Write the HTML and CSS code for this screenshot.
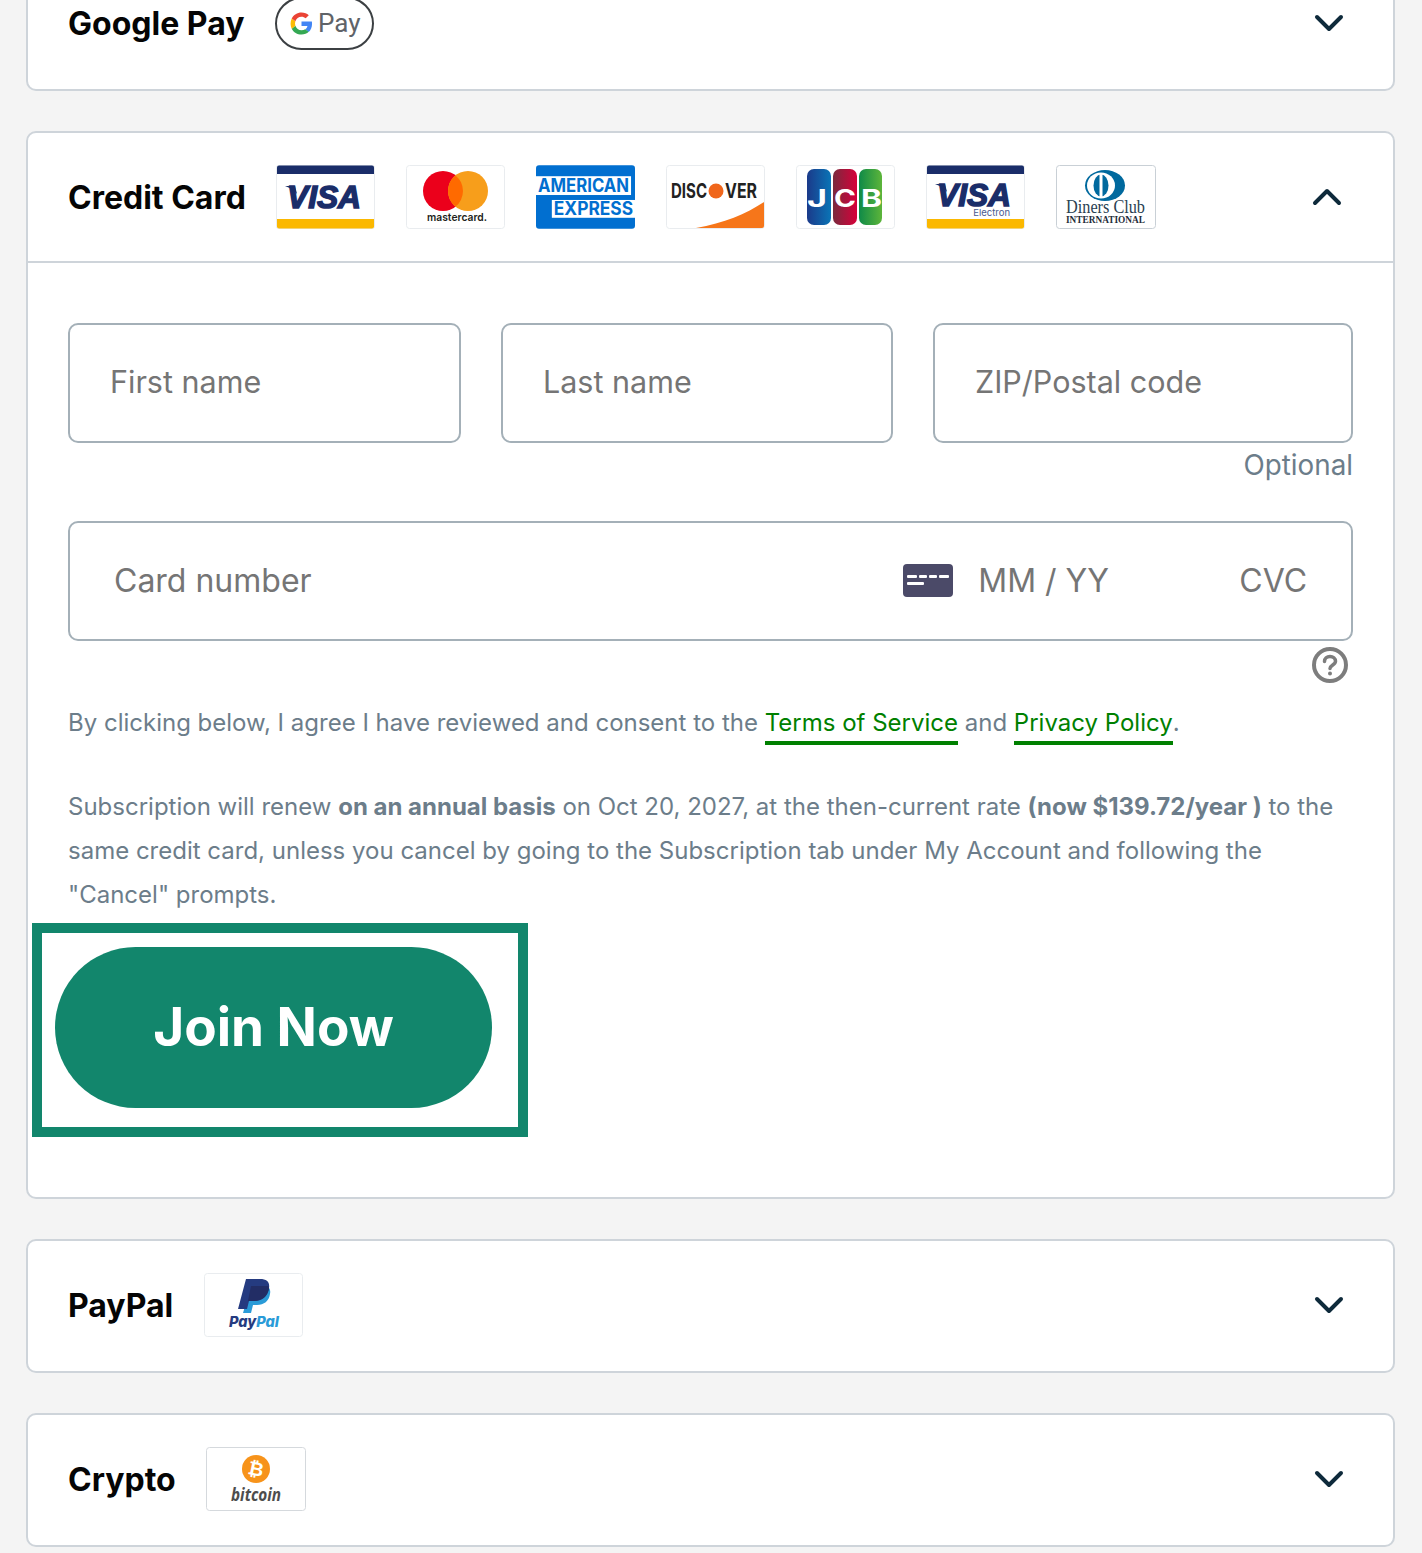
FILE: index.html
```html
<!DOCTYPE html>
<html lang="en">
<head>
<meta charset="utf-8">
<title>Payment</title>
<link rel="stylesheet" href="styles.css">
</head>
<body>
<main class="page">
  <section class="card">
    <header class="head">
      <h2 class="title">Google Pay</h2>
      <span class="gpay">
        <svg class="g" viewBox="0 0 24 24" width="23" height="23"><path fill="#4285f4" d="M23 12.300c0-.9-.1-1.600-.2-2.300H12v4.500h6.200c-.3 1.400-1.100 2.700-2.400 3.500l3.700 2.900c2.200-2 3.500-5 3.500-8.600z"/><path fill="#34a853" d="M12 23.500c3.100 0 5.700-1 7.500-2.800L15.800 18c-1 .7-2.300 1.100-3.800 1.100-3 0-5.500-2-6.400-4.700l-3.800 3c1.900 3.700 5.700 6.100 10.200 6.100z"/><path fill="#fbbc04" d="M5.600 14.400c-.5-1.500-.5-3.200 0-4.700l-3.800-3c-1.600 3.200-1.600 7.500 0 10.700z"/><path fill="#ea4335" d="M12 4.900c1.700 0 3.200.6 4.400 1.700l3.200-3.200C17.700 1.600 15.100.5 12 .5 7.500.5 3.700 3 1.800 6.700l3.800 3C6.500 6.900 9 4.900 12 4.900z"/></svg>
        <span class="gpay-text">Pay</span>
      </span>
      <svg class="chev" viewBox="0 0 30 20" width="30" height="20"><path d="M3 4l12 12L27 4"/></svg>
    </header>
  </section>

  <section class="card">
    <header class="head head-rule">
      <h2 class="title">Credit Card</h2>
      <div class="logos">
        <svg class="logo" viewBox="0 0 99 64"><rect x=".5" y=".5" width="98" height="63" rx="2" fill="#fff" stroke="#e9ecef"/><path fill="#1a2d69" d="M1 2.500a2 2 0 0 1 2-2h93a2 2 0 0 1 2 2V9H1z"/><path fill="#fbb800" d="M1 54h97v7.500a2 2 0 0 1-2 2H3a2 2 0 0 1-2-2z"/><path fill="#1a2d69" d="M9 21h10l2 8c-3-4-7-6-12-8z"/><text x="11" y="43" class="t-visa" textLength="74" lengthAdjust="spacingAndGlyphs">VISA</text></svg>
        <svg class="logo" viewBox="0 0 99 64"><rect x=".5" y=".5" width="98" height="63" rx="3" fill="#fff" stroke="#e9ecef"/><circle cx="37" cy="26" r="20" fill="#eb001b"/><circle cx="62" cy="26" r="20" fill="#f79e1b"/><path fill="#ff6a00" d="M49.500 10.400a20 20 0 0 1 0 31.200a20 20 0 0 1 0-31.200z"/><text x="21" y="56" class="t-mc" textLength="60" lengthAdjust="spacingAndGlyphs">mastercard.</text></svg>
        <svg class="logo" viewBox="0 0 100 64"><rect width="100" height="64" rx="3" fill="#016fd0"/><rect y="11" width="96" height="19" fill="#fff"/><rect x="16" y="35" width="84" height="18" fill="#fff"/><text x="2" y="23" class="t-amex" transform="scale(1 1.180)" textLength="92" lengthAdjust="spacingAndGlyphs">AMERICAN</text><text x="18" y="42.500" class="t-amex" transform="scale(1 1.180)" textLength="80" lengthAdjust="spacingAndGlyphs">EXPRESS</text></svg>
        <svg class="logo" viewBox="0 0 99 64"><rect x=".5" y=".5" width="98" height="63" rx="3" fill="#fff" stroke="#e9ecef"/><path fill="#f6761a" d="M30 63c28-5 50-14 68-26v24a2 2 0 0 1-2 2z"/><text x="5" y="33" class="t-disc" textLength="36" lengthAdjust="spacingAndGlyphs">DISC</text><circle cx="50" cy="26" r="7.500" fill="#f0661b"/><text x="59" y="33" class="t-disc" textLength="32" lengthAdjust="spacingAndGlyphs">VER</text></svg>
        <svg class="logo" viewBox="0 0 99 64"><defs><linearGradient id="jb" x1="0" x2="1"><stop offset="0" stop-color="#1b3a8a"/><stop offset="1" stop-color="#0a74b6"/></linearGradient><linearGradient id="jr" x1="0" x2="1"><stop offset="0" stop-color="#7a2a3e"/><stop offset="1" stop-color="#d7003a"/></linearGradient><linearGradient id="jg" x1="0" x2="1"><stop offset="0" stop-color="#0f8a48"/><stop offset="1" stop-color="#5db53a"/></linearGradient></defs><rect x=".5" y=".5" width="98" height="63" rx="3" fill="#fff" stroke="#e9ecef"/><rect x="11" y="4" width="24" height="56" rx="7" fill="url(#jb)"/><rect x="37" y="4" width="24" height="56" rx="7" fill="url(#jr)"/><rect x="63" y="4" width="23" height="56" rx="7" fill="url(#jg)"/><text x="11" y="42" class="t-jcb" textLength="20" lengthAdjust="spacingAndGlyphs">J</text><text x="38" y="42" class="t-jcb" textLength="22" lengthAdjust="spacingAndGlyphs">C</text><text x="65" y="42" class="t-jcb" textLength="21" lengthAdjust="spacingAndGlyphs">B</text></svg>
        <svg class="logo" viewBox="0 0 99 64"><rect x=".5" y=".5" width="98" height="63" rx="2" fill="#fff" stroke="#e9ecef"/><path fill="#1a2d69" d="M1 2.500a2 2 0 0 1 2-2h93a2 2 0 0 1 2 2V9H1z"/><path fill="#fbb800" d="M1 54h97v7.500a2 2 0 0 1-2 2H3a2 2 0 0 1-2-2z"/><path fill="#1a2d69" d="M9 19h10l2 8c-3-4-7-6-12-8z"/><text x="11" y="41" class="t-visa" textLength="74" lengthAdjust="spacingAndGlyphs">VISA</text><text x="84" y="50.500" text-anchor="end" class="t-elec">Electron</text></svg>
        <svg class="logo logo-wide" viewBox="0 0 100 64"><rect x=".5" y=".5" width="99" height="63" rx="3" fill="#fff" stroke="#c9d0d6"/><ellipse cx="49" cy="20.500" rx="20" ry="15.500" fill="#00699e"/><ellipse cx="45" cy="20.500" rx="14" ry="13" fill="#fff"/><ellipse cx="45" cy="20.500" rx="7.500" ry="11" fill="#00699e"/><rect x="43.500" y="8" width="3" height="25" fill="#fff"/><text x="10" y="48" class="t-din" textLength="79" lengthAdjust="spacingAndGlyphs">Diners Club</text><text x="10" y="58" class="t-din2" textLength="79" lengthAdjust="spacingAndGlyphs">INTERNATIONAL</text></svg>
      </div>
      <svg class="chev chev-up" viewBox="0 0 30 20" width="30" height="20"><path d="M3 16L15 4l12 12"/></svg>
    </header>

    <form class="form">
      <div class="name-row">
        <div class="field"><div class="input"><span class="ph">First name</span></div></div>
        <div class="field"><div class="input"><span class="ph">Last name</span></div></div>
        <div class="field">
          <div class="input"><span class="ph">ZIP/Postal code</span></div>
          <div class="optional">Optional</div>
        </div>
      </div>

      <div class="input card-input">
        <span class="ph ph-card">Card number</span>
        <svg class="ci" viewBox="0 0 50 33" width="50" height="33"><rect width="50" height="33" rx="4" fill="#4b4a68"/><g fill="#fff"><rect x="4" y="11" width="10" height="3" rx="1"/><rect x="16" y="11" width="8" height="3" rx="1"/><rect x="26" y="11" width="8" height="3" rx="1"/><rect x="36" y="11" width="10" height="3" rx="1"/><rect x="4" y="18" width="17" height="3" rx="1"/></g></svg>
        <span class="ph ph-exp">MM / YY</span>
        <span class="ph ph-cvc">CVC</span>
      </div>
      <div class="help-row">
        <svg viewBox="0 0 36 36" width="36" height="36"><circle cx="18" cy="18" r="16" fill="none" stroke="#7d7d7d" stroke-width="4"/><path d="M12.500 14.500c0-3 2.500-5 5.500-5s5.500 2 5.500 4.800c0 3.600-5.500 3.700-5.500 7.200" fill="none" stroke="#7d7d7d" stroke-width="3.500" stroke-linecap="round"/><circle cx="18" cy="26.500" r="2" fill="#7d7d7d"/></svg>
      </div>

      <p class="legal">By clicking below, I agree I have reviewed and consent to the <a class="link">Terms of Service</a> and <a class="link">Privacy Policy</a>.</p>
      <p class="legal legal-2">Subscription will renew <b>on an annual basis</b> on Oct 20, 2027, at the then-current rate <b>(now $139.72/year )</b> to the same credit card, unless you cancel by going to the Subscription tab under My Account and following the "Cancel" prompts.</p>

      <div class="join-frame"><button type="button" class="join">Join Now</button></div>
    </form>
  </section>

  <section class="card">
    <header class="head">
      <h2 class="title">PayPal</h2>
      <svg class="logo" viewBox="0 0 99 64"><rect x=".5" y=".5" width="98" height="63" rx="3" fill="#fff" stroke="#e9ecef"/><path fill="#2a9bd8" d="M47 13h12c6 0 8 3 7 8-1 7-6 11-13 11h-4l-2 8h-8z"/><path fill="#253b80" d="M42 6h14c7 0 10 3 9 9-1 8-7 13-15 13h-5l-2 8h-9z"/><path fill="#222d65" d="M47 13h17c1 1 1 2 1 3-2 8-7 12-15 12h-6z"/><text x="25" y="54" class="t-pp" textLength="50" lengthAdjust="spacingAndGlyphs"><tspan fill="#253b80">Pay</tspan><tspan fill="#2a9bd8">Pal</tspan></text></svg>
      <svg class="chev" viewBox="0 0 30 20" width="30" height="20"><path d="M3 4l12 12L27 4"/></svg>
    </header>
  </section>

  <section class="card">
    <header class="head">
      <h2 class="title">Crypto</h2>
      <svg class="logo logo-wide" viewBox="0 0 100 64"><rect x=".5" y=".5" width="99" height="63" rx="3" fill="#fff" stroke="#d5d9dd"/><circle cx="50" cy="22" r="14" fill="#f7931a"/><text x="50" y="28.500" text-anchor="middle" class="t-btc" transform="rotate(12 50 22)">₿</text><text x="25" y="54" class="t-bit" textLength="50" lengthAdjust="spacingAndGlyphs">bitcoin</text></svg>
      <svg class="chev" viewBox="0 0 30 20" width="30" height="20"><path d="M3 4l12 12L27 4"/></svg>
    </header>
  </section>
</main>
</body>
</html>
```

FILE: styles.css
```css
* { box-sizing: border-box; }
html, body { margin: 0; padding: 0; }
body { background: #f4f4f4; font-family: Inter, "Liberation Sans", sans-serif; overflow: hidden; }

.page {
  display: flex;
  flex-direction: column;
  gap: 40px;
  margin-top: -43px;
  padding: 0 27px 0 26px;
}

.card {
  background: #fff;
  border: 2px solid #ced4da;
  border-radius: 10px;
}

.head {
  display: flex;
  align-items: center;
  height: 130px;
  padding: 0 49px 2px 40px;
}
.head-rule { border-bottom: 2px solid #ced4da; padding-bottom: 0; }

.title {
  margin: 0 30.500px 0 0;
  font-size: 32px;
  font-weight: 650;
  color: #050505;
  white-space: nowrap;
}

.gpay {
  display: flex;
  align-items: center;
  gap: 5px;
  width: 99px;
  height: 53px;
  padding-left: 13px;
  border: 2px solid #3c4043;
  border-radius: 27px;
}
.gpay-text { font-family: Roboto, sans-serif; font-size: 26px; color: #5f6368; }

.chev { margin-left: auto; fill: none; stroke: #0e2a3b; stroke-width: 4; stroke-linecap: round; stroke-linejoin: round; }
.chev-up { margin-right: 2px; }

.logos { display: flex; gap: 31px; }
.logo { width: 99px; height: 64px; flex: none; }
.logo-wide { width: 100px; }

.t-visa { font: italic 700 32px "Liberation Sans", sans-serif; fill: #1a2d69; stroke: #1a2d69; stroke-width: 1.500px; }
.t-elec { font: 400 9.500px Inter, sans-serif; fill: #4a5a90; }
.t-mc { font: 600 11px Inter, sans-serif; fill: #231f20; }
.t-amex { font: 700 16px Inter, sans-serif; fill: #016fd0; }
.t-disc { font: 700 20px Inter, sans-serif; fill: #222; }
.t-jcb { font: 700 24px Inter, sans-serif; fill: #fff; }
.t-din { font: 400 18px "Liberation Serif", serif; fill: #2a3f52; }
.t-din2 { font: 700 9.500px "Liberation Serif", serif; fill: #1f2d3a; }
.t-pp { font: italic 800 15px Inter, sans-serif; }
.t-btc { font: 700 19px "DejaVu Sans", sans-serif; fill: #fff; }
.t-bit { font: italic 700 17px "Open Sans", sans-serif; fill: #4d4d4d; }

.form { padding: 60px 40px 60px; }

.name-row {
  display: grid;
  grid-template-columns: 393px 392px 1fr;
  column-gap: 40px;
  margin-bottom: 38px;
}

.input {
  display: flex;
  align-items: center;
  height: 120px;
  padding: 0 40px 3px;
  background: #fff;
  border: 2px solid #a4b0b8;
  border-radius: 10px;
}

.ph { font-size: 30.500px; color: #757575; white-space: nowrap; }

.optional {
  margin-top: 4px;
  height: 36px;
  line-height: 36px;
  text-align: right;
  font-size: 27.800px;
  color: #6c7d8a;
}

.card-input { padding: 0 44px 1px 44px; }
.card-input .ph { font-size: 32px; }
.ph-card { flex: 1; }
.ci { flex: none; }
.card-input .ph-exp { width: 286px; padding-left: 25px; }

.help-row { display: flex; justify-content: flex-end; padding: 6px 5px 0 0; height: 43px; }

.legal {
  margin: 17px 0 0;
  font-size: 24px;
  line-height: 44px;
  color: #6c7d8a;
}
.legal-2 { margin-top: 40px; }
.legal b { font-weight: 700; }

.link {
  display: inline-block;
  line-height: 36px;
  color: #008000;
  border-bottom: 4px solid #008000;
}

.join-frame {
  width: 496px;
  height: 214px;
  margin: 6px 0 0 -36px;
  padding: 14px 0 0 13px;
  border: 10px solid #12866c;
}

.join {
  display: block;
  width: 437px;
  height: 161px;
  border: 0;
  border-radius: 81px;
  background: #12866c;
  color: #fff;
  font: 650 53px Inter, sans-serif;
  padding: 0 0 2px;
}
```
